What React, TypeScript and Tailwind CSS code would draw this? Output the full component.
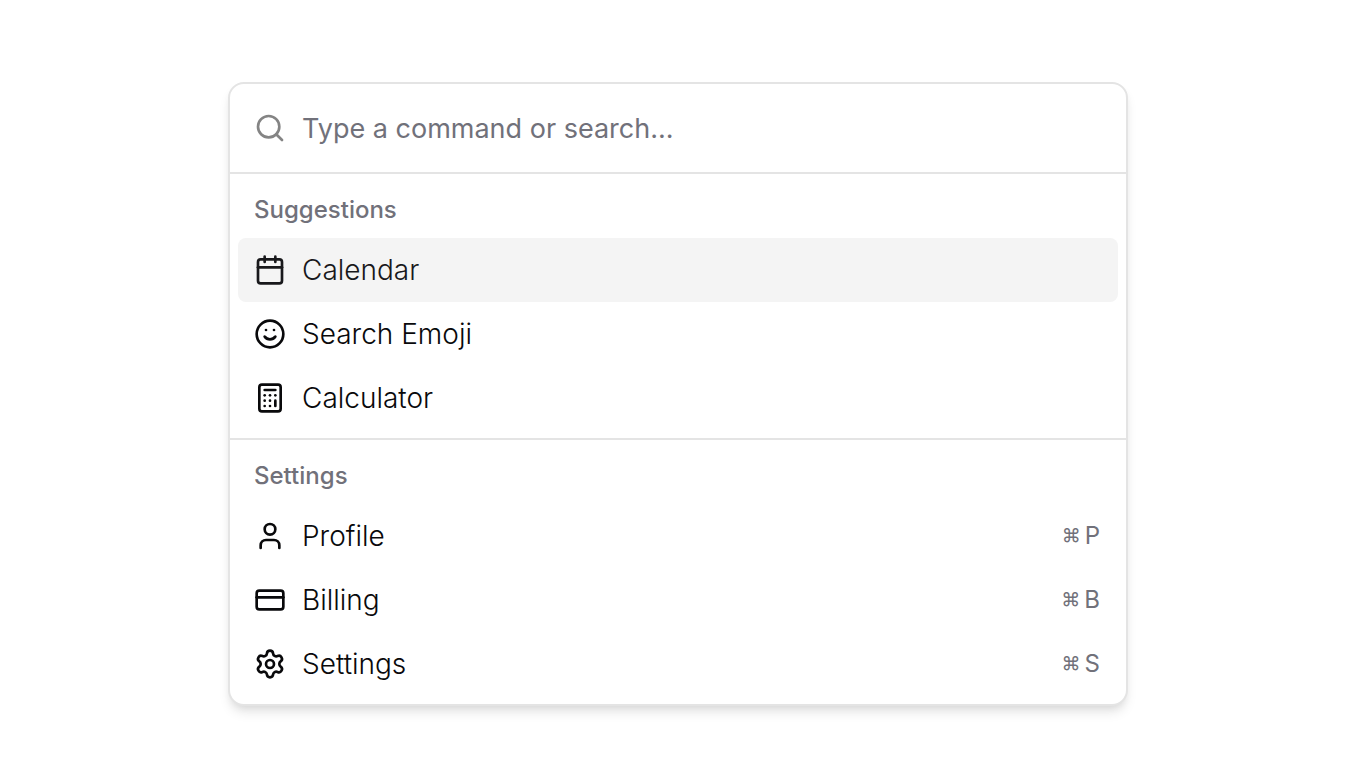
import {
  Calculator,
  Calendar,
  CreditCard,
  Search,
  Settings,
  Smile,
  User,
  type LucideIcon,
} from "lucide-react";

type Command = {
  label: string;
  icon: LucideIcon;
  shortcut?: string;
  selected?: boolean;
};

const suggestions: Command[] = [
  { label: "Calendar", icon: Calendar, selected: true },
  { label: "Search Emoji", icon: Smile },
  { label: "Calculator", icon: Calculator },
];

const settings: Command[] = [
  { label: "Profile", icon: User, shortcut: "P" },
  { label: "Billing", icon: CreditCard, shortcut: "B" },
  { label: "Settings", icon: Settings, shortcut: "S" },
];

function CommandItem({ label, icon: Icon, shortcut, selected }: Command) {
  return (
    <li>
      <button
        type="button"
        className={`flex h-16 w-full items-center gap-4 rounded-lg px-4 text-left text-[28px] leading-10 font-[340] ${
          selected ? "bg-[#f4f4f4] text-[#18181b]" : "text-[#09090b]"
        }`}
      >
        <Icon className="size-8 shrink-0" aria-hidden="true" />
        <span>{label}</span>
        {shortcut && (
          <kbd className="ml-auto flex items-center gap-1 pr-0.5 font-['Inter',sans-serif] text-2xl font-normal text-[#71717a]">
            <span className="text-[19px]">⌘</span>
            <span>{shortcut}</span>
          </kbd>
        )}
      </button>
    </li>
  );
}

function CommandGroup({ heading, items }: { heading: string; items: Command[] }) {
  return (
    <section className="p-2">
      <h2 className="px-4 py-3 text-2xl leading-8 font-medium text-[#71717a]">
        {heading}
      </h2>
      <ul>
        {items.map((item) => (
          <CommandItem key={item.label} {...item} />
        ))}
      </ul>
    </section>
  );
}

export default function App() {
  return (
    <main className="flex min-h-screen items-start justify-center bg-white pt-[82px] pr-1.5 font-['Inter',sans-serif]">
      <div className="w-full max-w-[900px] rounded-2xl border-2 border-[#e4e4e4] bg-white shadow-[0_8px_12px_-2px_rgb(0_0_0/0.1),0_4px_8px_-4px_rgb(0_0_0/0.1)]">
        <div className="flex items-center gap-4 border-b-2 border-[#e4e4e4] px-6">
          <Search className="size-8 shrink-0 text-[#848484]" aria-hidden="true" />
          <input
            type="text"
            aria-label="Search commands"
            placeholder="Type a command or search..."
            className="h-[88px] min-w-0 flex-1 bg-transparent text-[27px] text-[#09090b] outline-none placeholder:text-[#71717a]"
          />
        </div>
        <CommandGroup heading="Suggestions" items={suggestions} />
        <hr className="border-t-2 border-[#e4e4e4]" />
        <CommandGroup heading="Settings" items={settings} />
      </div>
    </main>
  );
}
